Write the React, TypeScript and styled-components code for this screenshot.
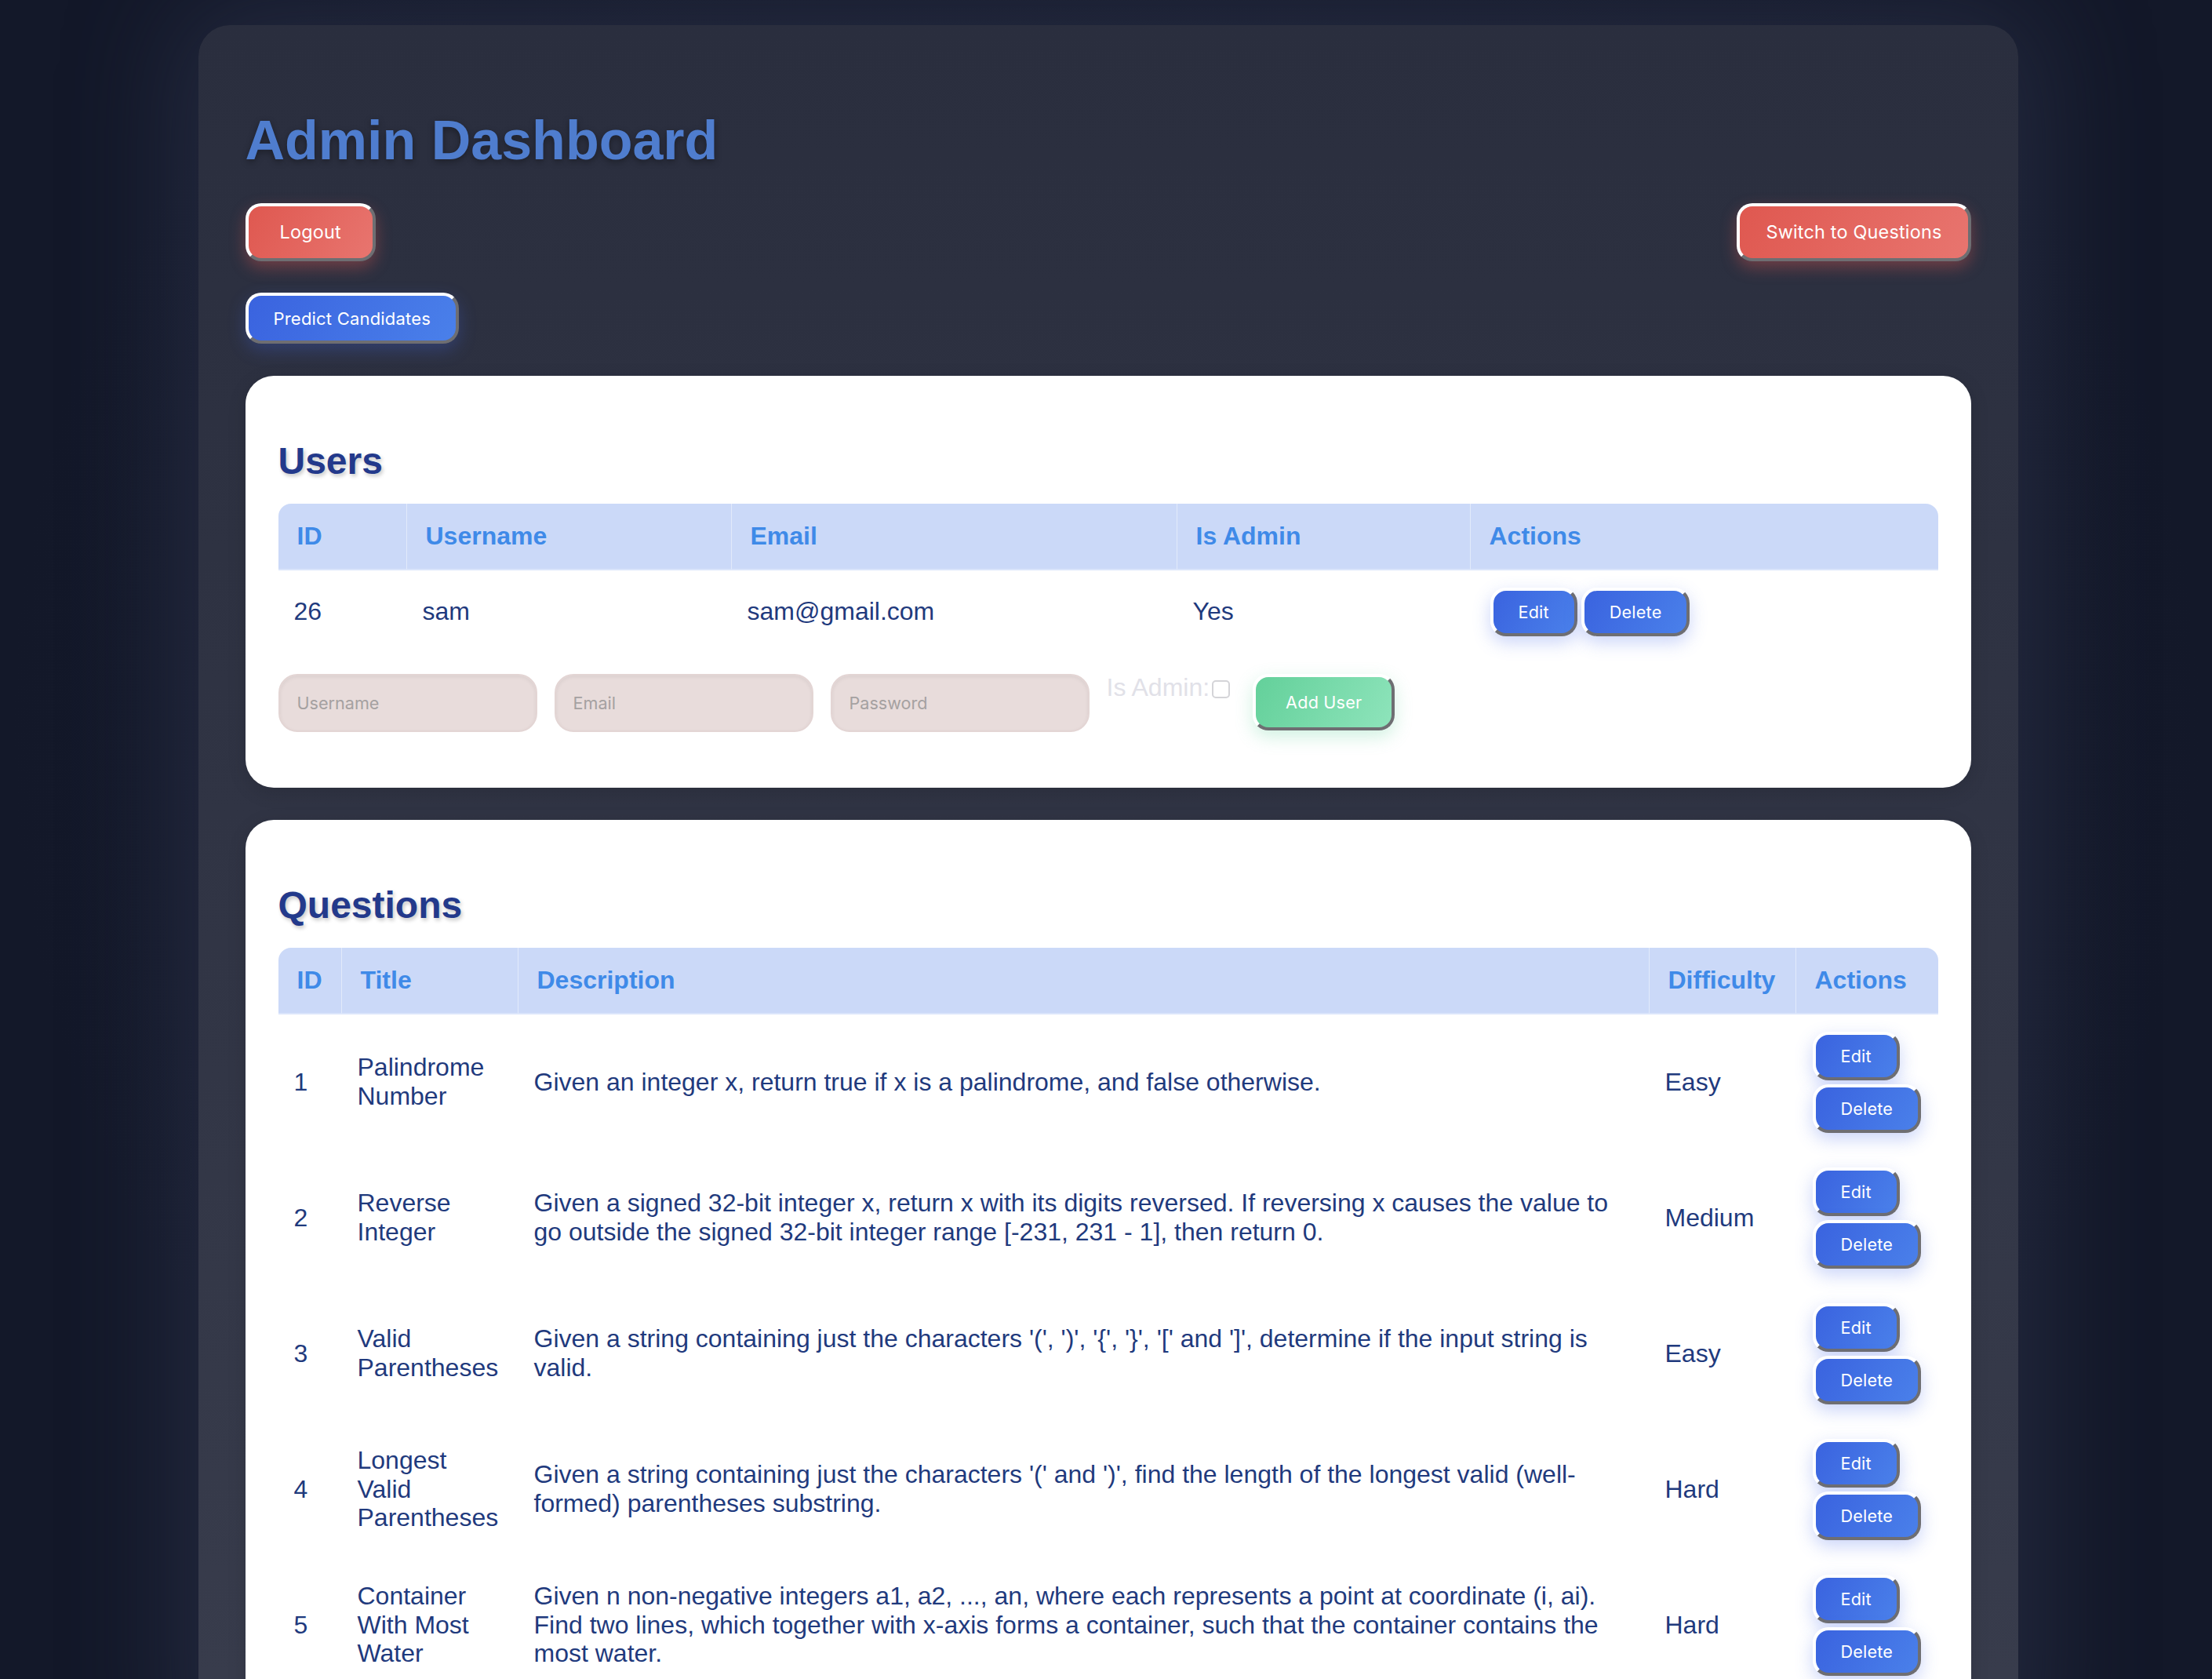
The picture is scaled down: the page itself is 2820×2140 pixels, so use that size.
import React from "react";
import styled, { createGlobalStyle } from "styled-components";

const GlobalStyle = createGlobalStyle`
  html {
    scrollbar-width: none;
  }
  html::-webkit-scrollbar {
    display: none;
  }
  html, body {
    margin: 0;
    padding: 0;
    background: #131829;
  }
  body {
    min-height: 100vh;
    font-family: "Liberation Sans", Arial, Helvetica, sans-serif;
  }
  * { box-sizing: border-box; }
`;

const Page = styled.div`
  display: flex;
  justify-content: center;
  padding: 32px 0 60px 5px;
  background: radial-gradient(ellipse at 50% 40%, #1a1f31 0%, #131829 70%);
  min-height: 100vh;
`;

const Shell = styled.div`
  width: 2320px;
  padding: 60px;
  border-radius: 40px;
  background: linear-gradient(180deg, #2a2e3e 0%, #323646 60%, #393d4d 100%);
  box-shadow: 0 0 140px 30px rgba(55, 62, 88, 0.45);
`;

const Title = styled.h1`
  margin: 47px 0 40px;
  font-family: "Liberation Sans", Arial, Helvetica, sans-serif;
  font-size: 70px;
  font-weight: 700;
  line-height: normal;
  color: #4f7dce;
  text-shadow: 0 3px 8px rgba(0, 0, 0, 0.35);
`;

const TopBar = styled.div`
  display: flex;
  justify-content: space-between;
  align-items: flex-start;
`;

const SecondBar = styled.div`
  display: flex;
  margin-top: 40px;
`;

type Tone = "red" | "blue" | "green";

const toneBg: Record<Tone, string> = {
  red: "linear-gradient(120deg, #df5850 0%, #e8756f 100%)",
  blue: "linear-gradient(120deg, #3a63df 0%, #4a80ea 100%)",
  green: "linear-gradient(120deg, #63d09a 0%, #8ee4bb 100%)",
};

const toneGlow: Record<Tone, string> = {
  red: "0 8px 20px rgba(223, 88, 80, 0.38)",
  blue: "0 8px 22px rgba(70, 105, 235, 0.28)",
  green: "0 8px 22px rgba(99, 208, 154, 0.3)",
};

type Size = "lg" | "wide" | "md" | "sm" | "add";

const sizePadding: Record<Size, string> = {
  lg: "19px 40px",
  wide: "19px 33px",
  md: "14.5px 32px",
  sm: "14px 32px",
  add: "19px 38px",
};

const Button = styled.button<{ $tone: Tone; $size: Size }>`
  display: inline-block;
  font-family: Inter, "Noto Sans", sans-serif;
  font-size: ${(p) =>
    p.$size === "lg" || p.$size === "wide" ? "23.4px" : p.$size === "md" ? "22px" : "21.6px"};
  line-height: ${(p) => (p.$size === "sm" || p.$size === "add" ? "26px" : "28px")};
  font-weight: 400;
  letter-spacing: 0.2px;
  color: #ffffff;
  padding: ${(p) => sizePadding[p.$size]};
  background: ${(p) => toneBg[p.$tone]};
  border-style: solid;
  border-width: 4px;
  border-color: #ffffff #6e6e72 #6e6e72 #ffffff;
  border-radius: 20px;
  box-shadow: ${(p) => toneGlow[p.$tone]};
  cursor: pointer;
  white-space: nowrap;
`;

const Card = styled.section`
  margin-top: 41px;
  background: #ffffff;
  border-radius: 36px;
  padding: 42px;
  box-shadow: 0 6px 24px rgba(0, 0, 0, 0.12);
`;

const CardTitle = styled.h2`
  margin: 39px 0 27px;
  font-family: "Liberation Sans", Arial, Helvetica, sans-serif;
  font-size: 48px;
  font-weight: 700;
  line-height: normal;
  color: #23398b;
  text-shadow: 2px 3px 5px rgba(0, 0, 0, 0.22);
`;

const Table = styled.table`
  width: 100%;
  table-layout: fixed;
  border-collapse: separate;
  border-spacing: 0;
  font-family: "Liberation Sans", Arial, Helvetica, sans-serif;
`;

const Col = styled.col<{ $w: number }>`
  width: ${(p) => p.$w}px;
`;

const Th = styled.th`
  text-align: left;
  padding: 23px 24px;
  font-size: 32px;
  font-weight: 700;
  line-height: 36.8px;
  color: #3f8ae8;
  background: #cbd9f8;
  border-right: 1px solid rgba(255, 255, 255, 0.45);
  border-bottom: 2px solid #dbe5fb;
  &:first-child {
    border-top-left-radius: 16px;
  }
  &:last-child {
    border-right: none;
    border-top-right-radius: 16px;
  }
`;

const Td = styled.td`
  padding: 22px 20px;
  font-size: 32px;
  line-height: 36.8px;
  color: #1f3a7d;
  vertical-align: middle;
`;

const Actions = styled.div<{ $stack?: boolean }>`
  display: flex;
  flex-direction: ${(p) => (p.$stack ? "column" : "row")};
  align-items: flex-start;
  gap: 5px;
  margin-left: ${(p) => (p.$stack ? "1px" : "5px")};
`;

const AddForm = styled.form`
  display: flex;
  align-items: flex-start;
  gap: 22px;
  margin: 26px 0 29px;
`;

const Field = styled.input`
  width: 330px;
  height: 74px;
  padding: 0 22px;
  font-family: Inter, "Noto Sans", sans-serif;
  font-size: 21.6px;
  color: #333;
  background: #e8dcdb;
  border: 2px solid #e3d5d4;
  border-radius: 24px;
  box-shadow: inset 0 2px 5px rgba(0, 0, 0, 0.06);
  outline: none;
  &::placeholder {
    color: #a5a1a1;
  }
`;

const AdminLabel = styled.label`
  display: flex;
  align-items: center;
  font-family: "Liberation Sans", Arial, Helvetica, sans-serif;
  font-size: 32px;
  line-height: 36px;
  color: #e1e1e8;
  margin-top: -1px;
`;

const Check = styled.input`
  width: 23px;
  height: 23px;
  margin: 5px 0 0 3px;
  appearance: none;
  border: 2px solid #d4d4d8;
  border-radius: 5px;
  background: #fff;
`;

const AddWrap = styled.div`
  margin-left: 7px;
`;

type Question = { id: number; title: string; description: string; difficulty: string };

const questions: Question[] = [
  {
    id: 1,
    title: "Palindrome Number",
    description: "Given an integer x, return true if x is a palindrome, and false otherwise.",
    difficulty: "Easy",
  },
  {
    id: 2,
    title: "Reverse Integer",
    description:
      "Given a signed 32-bit integer x, return x with its digits reversed. If reversing x causes the value to go outside the signed 32-bit integer range [-231, 231 - 1], then return 0.",
    difficulty: "Medium",
  },
  {
    id: 3,
    title: "Valid Parentheses",
    description:
      "Given a string containing just the characters '(', ')', '{', '}', '[' and ']', determine if the input string is valid.",
    difficulty: "Easy",
  },
  {
    id: 4,
    title: "Longest Valid Parentheses",
    description:
      "Given a string containing just the characters '(' and ')', find the length of the longest valid (well-formed) parentheses substring.",
    difficulty: "Hard",
  },
  {
    id: 5,
    title: "Container With Most Water",
    description:
      "Given n non-negative integers a1, a2, ..., an, where each represents a point at coordinate (i, ai). Find two lines, which together with x-axis forms a container, such that the container contains the most water.",
    difficulty: "Hard",
  },
];

export default function App() {
  return (
    <>
      <GlobalStyle />
      <Page>
        <Shell>
          <Title>Admin Dashboard</Title>
          <TopBar>
            <Button $tone="red" $size="lg">Logout</Button>
            <Button $tone="red" $size="wide">Switch to Questions</Button>
          </TopBar>
          <SecondBar>
            <Button $tone="blue" $size="md">Predict Candidates</Button>
          </SecondBar>

          <Card>
            <CardTitle>Users</CardTitle>
            <Table>
              <colgroup>
                <Col $w={164} />
                <Col $w={414} />
                <Col $w={568} />
                <Col $w={374} />
                <Col $w={596} />
              </colgroup>
              <thead>
                <tr>
                  <Th>ID</Th>
                  <Th>Username</Th>
                  <Th>Email</Th>
                  <Th>Is Admin</Th>
                  <Th>Actions</Th>
                </tr>
              </thead>
              <tbody>
                <tr>
                  <Td>26</Td>
                  <Td>sam</Td>
                  <Td>sam@gmail.com</Td>
                  <Td>Yes</Td>
                  <Td>
                    <Actions>
                      <Button $tone="blue" $size="sm">Edit</Button>
                      <Button $tone="blue" $size="sm">Delete</Button>
                    </Actions>
                  </Td>
                </tr>
              </tbody>
            </Table>
            <AddForm onSubmit={(e) => e.preventDefault()}>
              <Field type="text" placeholder="Username" />
              <Field type="email" placeholder="Email" />
              <Field type="password" placeholder="Password" />
              <AdminLabel>
                Is Admin:
                <Check type="checkbox" />
              </AdminLabel>
              <AddWrap>
                <Button $tone="green" $size="add" type="submit">Add User</Button>
              </AddWrap>
            </AddForm>
          </Card>

          <Card>
            <CardTitle>Questions</CardTitle>
            <Table>
              <colgroup>
                <Col $w={81} />
                <Col $w={225} />
                <Col $w={1442} />
                <Col $w={187} />
                <Col $w={181} />
              </colgroup>
              <thead>
                <tr>
                  <Th>ID</Th>
                  <Th>Title</Th>
                  <Th>Description</Th>
                  <Th>Difficulty</Th>
                  <Th>Actions</Th>
                </tr>
              </thead>
              <tbody>
                {questions.map((q) => (
                  <tr key={q.id}>
                    <Td>{q.id}</Td>
                    <Td>{q.title}</Td>
                    <Td>{q.description}</Td>
                    <Td>{q.difficulty}</Td>
                    <Td>
                      <Actions $stack>
                        <Button $tone="blue" $size="sm">Edit</Button>
                        <Button $tone="blue" $size="sm">Delete</Button>
                      </Actions>
                    </Td>
                  </tr>
                ))}
              </tbody>
            </Table>
          </Card>
        </Shell>
      </Page>
    </>
  );
}
